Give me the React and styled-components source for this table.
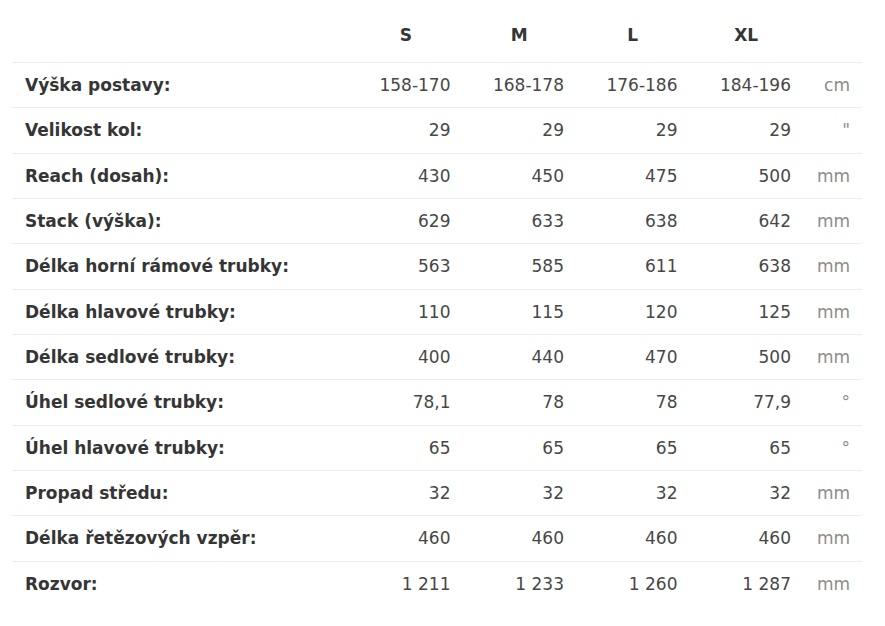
import React from "react";
import styled, { createGlobalStyle } from "styled-components";

const GlobalStyle = createGlobalStyle`
  html, body { margin: 0; padding: 0; background: #fff; }
  body { font-family: "DejaVu Sans", Verdana, sans-serif; }
`;

const Table = styled.div`
  display: grid;
  grid-template-columns: 337px repeat(4, 113.5px) 59px;
  width: 850px;
  margin: 8px 0 0 12px;
  font-size: 17px;
`;

const Row = styled.div`
  display: contents;
`;

const Cell = styled.div`
  box-sizing: border-box;
  display: flex;
  align-items: center;
  height: ${(p) => (p.$head ? "54px" : "45.33px")};
  border-top: ${(p) => (p.$head ? "none" : "1px solid #ededed")};
  padding: 0 12px;
  white-space: nowrap;
`;

const Label = styled(Cell)`
  padding-left: 13px;
  font-weight: bold;
  color: #353535;
`;

const HeadCell = styled(Cell)`
  justify-content: center;
  font-weight: bold;
  color: #353535;
`;

const Value = styled(Cell)`
  justify-content: flex-end;
  color: #474747;
`;

const Unit = styled(Cell)`
  justify-content: flex-end;
  color: #8c8c8c;
`;

const sizes = ["S", "M", "L", "XL"];

const rows = [
  ["Výška postavy:", ["158-170", "168-178", "176-186", "184-196"], "cm"],
  ["Velikost kol:", ["29", "29", "29", "29"], '"'],
  ["Reach (dosah):", ["430", "450", "475", "500"], "mm"],
  ["Stack (výška):", ["629", "633", "638", "642"], "mm"],
  ["Délka horní rámové trubky:", ["563", "585", "611", "638"], "mm"],
  ["Délka hlavové trubky:", ["110", "115", "120", "125"], "mm"],
  ["Délka sedlové trubky:", ["400", "440", "470", "500"], "mm"],
  ["Úhel sedlové trubky:", ["78,1", "78", "78", "77,9"], "°"],
  ["Úhel hlavové trubky:", ["65", "65", "65", "65"], "°"],
  ["Propad středu:", ["32", "32", "32", "32"], "mm"],
  ["Délka řetězových vzpěr:", ["460", "460", "460", "460"], "mm"],
  ["Rozvor:", ["1 211", "1 233", "1 260", "1 287"], "mm"],
];

export default function App() {
  return (
    <>
      <GlobalStyle />
      <Table>
        <Row>
          <Cell $head />
          {sizes.map((s) => (
            <HeadCell $head key={s}>{s}</HeadCell>
          ))}
          <Cell $head />
        </Row>
        {rows.map(([label, vals, unit]) => (
          <Row key={label}>
            <Label>{label}</Label>
            {vals.map((v, i) => (
              <Value key={i}>{v}</Value>
            ))}
            <Unit>{unit}</Unit>
          </Row>
        ))}
      </Table>
    </>
  );
}
